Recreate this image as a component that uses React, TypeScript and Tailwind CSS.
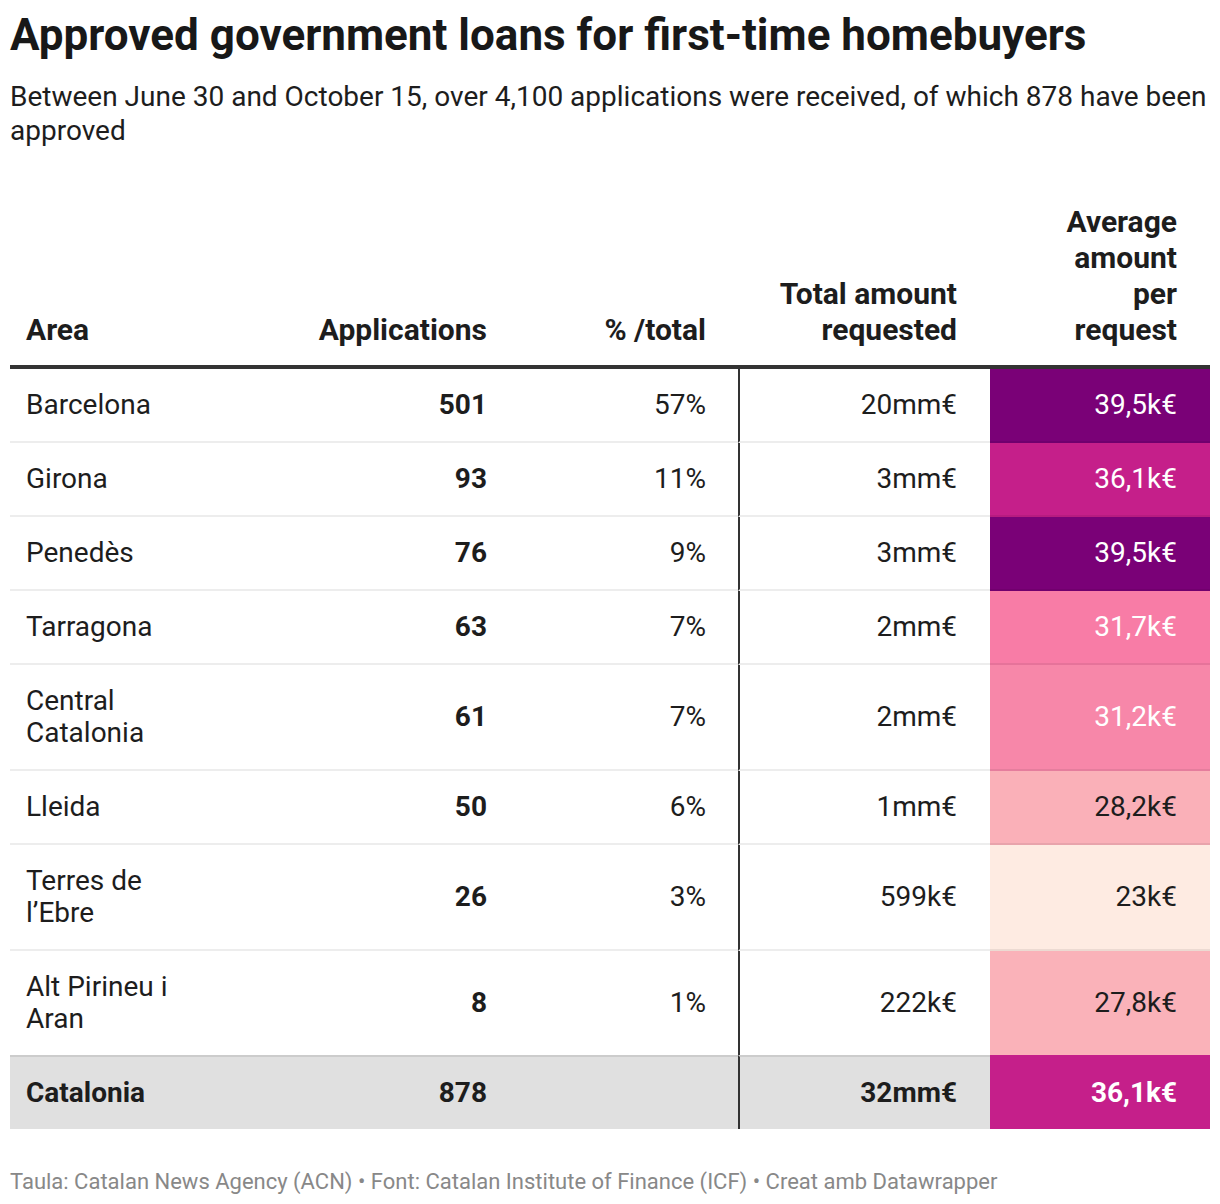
import React from "react";

type Row = {
  area: string;
  apps: string;
  pct: string;
  total: string;
  avg: string;
  bg: string;
  light: boolean;
};

const rows: Row[] = [
  { area: "Barcelona", apps: "501", pct: "57%", total: "20mm€", avg: "39,5k€", bg: "#7a0177", light: true },
  { area: "Girona", apps: "93", pct: "11%", total: "3mm€", avg: "36,1k€", bg: "#c51f8a", light: true },
  { area: "Penedès", apps: "76", pct: "9%", total: "3mm€", avg: "39,5k€", bg: "#7a0177", light: true },
  { area: "Tarragona", apps: "63", pct: "7%", total: "2mm€", avg: "31,7k€", bg: "#f87ca6", light: true },
  { area: "Central Catalonia", apps: "61", pct: "7%", total: "2mm€", avg: "31,2k€", bg: "#f787a9", light: true },
  { area: "Lleida", apps: "50", pct: "6%", total: "1mm€", avg: "28,2k€", bg: "#fab0b8", light: false },
  { area: "Terres de l’Ebre", apps: "26", pct: "3%", total: "599k€", avg: "23k€", bg: "#feebe2", light: false },
  { area: "Alt Pirineu i Aran", apps: "8", pct: "1%", total: "222k€", avg: "27,8k€", bg: "#fab2b9", light: false },
];

export default function App() {
  return (
    <div className="bg-white px-[10px] pt-[13px] pb-[12px] font-['Roboto',sans-serif] text-[#1d1d1d]">
      <h1 className="text-[44px] font-bold leading-[44px] text-[#181818]">
        Approved government loans for first-time homebuyers
      </h1>
      <p className="mt-[23px] text-[28px] leading-[34px] text-[#1d1d1d]">
        Between June 30 and October 15, over 4,100 applications were received, of which 878 have been approved
      </p>

      <table className="mt-[56px] w-[1200px] table-fixed border-separate border-spacing-0">
        <colgroup>
          <col className="w-[200px]" />
          <col className="w-[310px]" />
          <col className="w-[218px]" />
          <col className="w-[252px]" />
          <col className="w-[220px]" />
        </colgroup>
        <thead>
          <tr className="text-[30px] font-bold leading-[36px] text-[#1d1d1d]">
            <th className="border-b-[4px] border-[#333333] pb-[17px] pl-[16px] pr-[16px] text-left align-bottom font-bold">
              Area
            </th>
            <th className="border-b-[4px] border-[#333333] pb-[17px] pr-[33px] text-right align-bottom font-bold">
              Applications
            </th>
            <th className="border-b-[4px] border-[#333333] pb-[17px] pr-[32px] text-right align-bottom font-bold">
              % /total
            </th>
            <th className="border-b-[4px] border-[#333333] pb-[17px] pl-[16px] pr-[33px] text-right align-bottom font-bold">
              Total amount requested
            </th>
            <th className="border-b-[4px] border-[#333333] pb-[17px] pl-[57px] pr-[33px] text-right align-bottom font-bold">
              Average amount per request
            </th>
          </tr>
        </thead>
        <tbody className="text-[28px] leading-[32px]">
          {rows.map((r, i) => {
            const last = i === rows.length - 1;
            const b = last ? "" : "border-b-2 border-[rgba(0,0,0,0.07)]";
            return (
              <tr key={r.area}>
                <td className={`${b} py-[20px] pl-[16px] pr-[16px] text-left align-middle`}>{r.area}</td>
                <td className={`${b} py-[20px] pr-[33px] text-right align-middle font-bold`}>{r.apps}</td>
                <td className={`${b} py-[20px] pr-[32px] text-right align-middle`}>{r.pct}</td>
                <td className={`${b} border-l-2 border-l-[#333333] py-[20px] pr-[33px] text-right align-middle`}>
                  {r.total}
                </td>
                <td
                  className={`${b} py-[20px] pr-[33px] text-right align-middle ${r.light ? "text-white" : "text-[#1d1d1d]"}`}
                  style={{ backgroundColor: r.bg }}
                >
                  {r.avg}
                </td>
              </tr>
            );
          })}
          <tr className="bg-[#e0e0e0] font-bold">
            <td className="border-t-2 border-[#cccccc] py-[20px] pl-[16px] text-left">Catalonia</td>
            <td className="border-t-2 border-[#cccccc] py-[20px] pr-[33px] text-right">878</td>
            <td className="border-t-2 border-[#cccccc] py-[20px] pr-[32px] text-right"></td>
            <td className="border-t-2 border-l-2 border-t-[#cccccc] border-l-[#333333] py-[20px] pr-[33px] text-right">
              32mm€
            </td>
            <td className="border-t-2 border-[#c51f8a] bg-[#c51f8a] py-[20px] pr-[33px] text-right text-white">
              36,1k€
            </td>
          </tr>
        </tbody>
      </table>

      <p className="mt-[41px] text-[22px] leading-[24px] text-[#888888]">
        Taula: Catalan News Agency (ACN) • Font: Catalan Institute of Finance (ICF) • Creat amb Datawrapper
      </p>
    </div>
  );
}
